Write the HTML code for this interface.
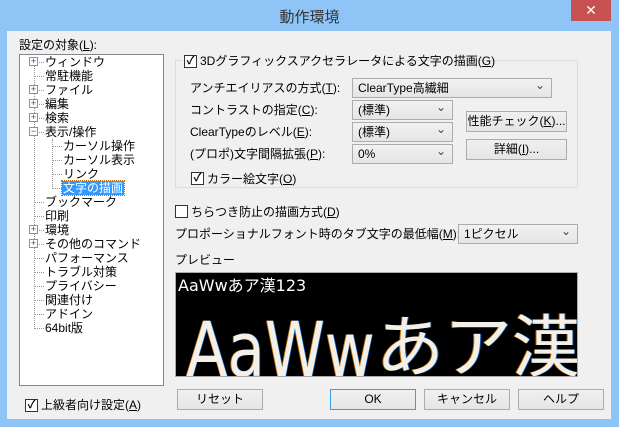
<!DOCTYPE html><html><head><meta charset="utf-8"><style>
*{box-sizing:border-box}
body{margin:0;width:619px;height:427px;overflow:hidden;background:#8ec5f6;font-family:"Liberation Sans","Noto Sans CJK JP",sans-serif;font-size:12px;color:#000;position:relative}
.a{position:absolute;white-space:nowrap;line-height:14px}
.client{position:absolute;left:7px;top:31px;width:604px;height:388px;background:#f0f0f0}
.title{position:absolute;left:0;top:6px;width:619px;text-align:center;font-size:15px;color:#333}
.close{position:absolute;left:571px;top:0;width:40px;height:21px;background:#c75050;color:#fff;text-align:center;font-size:14px;line-height:21px}
.tree{position:absolute;left:19px;top:54px;width:145px;height:332px;background:#fff;border:1px solid #828790}
.cb{position:absolute;width:13px;height:13px;border:1px solid #333;background:#fff;font-size:11px;line-height:11px;text-align:center;font-weight:bold}
.combo{position:absolute;height:20px;border:1px solid #acacac;background:linear-gradient(#f2f2f2,#e5e5e5);padding-left:5px;line-height:18px}
.combo:after{content:"⌄";position:absolute;right:6px;top:-3px;font-size:12px;color:#444}
.btn{position:absolute;height:21px;border:1px solid #acacac;background:linear-gradient(#f0f0f0,#e5e5e5);text-align:center;line-height:19px}
.exp{position:absolute;width:9px;height:9px;border:1px solid #919191;background:#fff;font-size:9px;line-height:7px;text-align:center;color:#1e4e8c}
.dl{position:absolute;border-top:1px dotted #999;width:7px}
.vl{position:absolute;border-left:1px dotted #999}
.big{position:absolute;white-space:nowrap;color:#f4f0e8;text-shadow:1px 0 #0060c0,-1px 0 #c07000;font-family:'DejaVu Sans','Noto Sans CJK JP',sans-serif}
</style></head><body>
<div class="title">動作環境</div>
<div class="close">✕</div>
<div class="client"></div>
<div class="a" style="left:19px;top:38px">設定の対象(<u>L</u>):</div>
<div class="tree">
<div class="vl" style="left:14px;top:8px;height:266px"></div>
<div class="vl" style="left:32px;top:84px;height:50px"></div>
</div>
<div id="t"></div>
<script>
var items=[["ウィンドウ",1,1],["常駐機能",1,0],["ファイル",1,1],["編集",1,1],["検索",1,1],["表示/操作",1,2],["カーソル操作",2,0],["カーソル表示",2,0],["リンク",2,0],["文字の描画",2,3],["ブックマーク",1,0],["印刷",1,0],["環境",1,1],["その他のコマンド",1,1],["パフォーマンス",1,0],["トラブル対策",1,0],["プライバシー",1,0],["関連付け",1,0],["アドイン",1,0],["64bit版",1,0]];
var h="";items.forEach(function(it,i){var y=55+i*14;var tx=it[1]==1?45:63;var lx=it[1]==1?34:52;
h+='<div class="dl" style="left:'+(lx)+'px;top:'+(y+7)+'px;width:'+(tx-lx-1)+'px"></div>';
if(it[2]==1||it[2]==2)h+='<div class="exp" style="left:29px;top:'+(y+2)+'px">'+(it[2]==1?'+':'−')+'</div>';
if(it[2]==3)h+='<div class="a" style="left:'+(tx-1)+'px;top:'+y+'px;background:#3399ff;color:#fff;outline:1px dotted #c60;padding:0 1px">'+it[0]+'</div>';
else h+='<div class="a" style="left:'+tx+'px;top:'+y+'px">'+it[0]+'</div>';});
document.getElementById("t").innerHTML=h;
</script>
<div style="position:absolute;left:175px;top:60px;width:403px;height:128px;border:1px solid #dcdcdc"></div>
<div class="a" style="left:182px;top:53px;background:#f0f0f0;padding:0 3px 0 2px;width:140px;height:14px"></div>
<div class="cb" style="left:184px;top:55px">✓</div>
<div class="a" style="left:200px;top:54px">3Dグラフィックスアクセラレータによる文字の描画(<u>G</u>)</div>
<div class="a" style="left:190px;top:81px">アンチエイリアスの方式(<u>T</u>):</div>
<div class="a" style="left:190px;top:103px">コントラストの指定(<u>C</u>):</div>
<div class="a" style="left:190px;top:125px">ClearTypeのレベル(<u>E</u>):</div>
<div class="a" style="left:190px;top:147px">(プロポ)文字間隔拡張(<u>P</u>):</div>
<div class="combo" style="left:352px;top:78px;width:200px">ClearType高繊細</div>
<div class="combo" style="left:352px;top:100px;width:101px">(標準)</div>
<div class="combo" style="left:352px;top:122px;width:101px">(標準)</div>
<div class="combo" style="left:352px;top:144px;width:101px">0%</div>
<div class="btn" style="left:466px;top:111px;width:101px">性能チェック(<u>K</u>)...</div>
<div class="btn" style="left:466px;top:139px;width:101px">詳細(<u>I</u>)...</div>
<div class="cb" style="left:191px;top:172px">✓</div>
<div class="a" style="left:207px;top:172px">カラー絵文字(<u>O</u>)</div>
<div class="cb" style="left:175px;top:205px"></div>
<div class="a" style="left:191px;top:205px">ちらつき防止の描画方式(<u>D</u>)</div>
<div class="a" style="left:175px;top:227px">プロポーショナルフォント時のタブ文字の最低幅(<u>M</u>):</div>
<div class="combo" style="left:458px;top:224px;width:120px">1ピクセル</div>
<div class="a" style="left:175px;top:253px">プレビュー</div>
<div style="position:absolute;left:175px;top:272px;width:403px;height:105px;background:#000;border:1px solid #aaa;overflow:hidden;color:#fff">
<div class="a" style="left:2px;top:4px;font-size:16px;line-height:18px;font-family:'DejaVu Sans','Noto Sans CJK JP',sans-serif">AaWwあア漢123</div>
<div class="big" style="left:10px;top:39px;font-size:76px;line-height:76px;transform:scaleX(0.8);transform-origin:0 0">AaWw</div>
<div class="big" style="left:200px;top:38px;font-size:68px;line-height:76px">あア漢</div>
</div>
<div class="cb" style="left:25px;top:399px">✓</div>
<div class="a" style="left:41px;top:398px">上級者向け設定(<u>A</u>)</div>
<div class="btn" style="left:177px;top:389px;width:86px">リセット</div>
<div class="btn" style="left:330px;top:389px;width:86px;border-color:#3c9de6">OK</div>
<div class="btn" style="left:424px;top:389px;width:86px">キャンセル</div>
<div class="btn" style="left:518px;top:389px;width:86px">ヘルプ</div>
</body></html>
